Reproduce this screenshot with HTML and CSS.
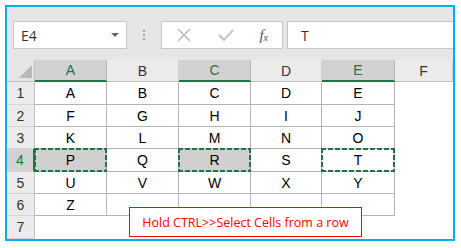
FILE: index.html
```html
<!DOCTYPE html>
<html lang="en">
<head>
    <meta charset="UTF-8">
    <meta name="viewport" content="width=device-width, initial-scale=1.0">
    <title>Select cells from a row</title>
    <link rel="stylesheet" href="styles.css">
</head>
<body>

<div class="frame">
    <div class="bar">
        <div class="namebox">
            <span>E4</span>
            <span class="arrow"></span>
        </div>
        <div class="dots"><i></i><i></i><i></i></div>
        <div class="fnbox">
            <svg width="16" height="16" viewBox="0 0 16 16"><path d="M2 2L14 14M14 2L2 14" stroke="#bdbdbd" stroke-width="1.6" fill="none"/></svg>
            <svg width="18" height="16" viewBox="0 0 18 16"><path d="M2 8L7 13L16 3" stroke="#bdbdbd" stroke-width="1.8" fill="none"/></svg>
            <span class="fx">f<sub>x</sub></span>
        </div>
        <div class="formula">T</div>
    </div>

    <div class="sheet">
        <div class="corner"><span class="tri"></span></div>
        <div class="hd sel">A</div>
        <div class="hd">B</div>
        <div class="hd sel">C</div>
        <div class="hd">D</div>
        <div class="hd sel">E</div>
        <div class="hd">F</div>

        <div class="rh">1</div>
        <div class="c">A</div><div class="c">B</div><div class="c">C</div><div class="c">D</div><div class="c">E</div><div class="c off"></div>

        <div class="rh">2</div>
        <div class="c">F</div><div class="c">G</div><div class="c">H</div><div class="c">I</div><div class="c">J</div><div class="c off"></div>

        <div class="rh">3</div>
        <div class="c">K</div><div class="c">L</div><div class="c">M</div><div class="c">N</div><div class="c">O</div><div class="c off"></div>

        <div class="rh sel">4</div>
        <div class="c grey ants">P</div><div class="c">Q</div><div class="c grey ants">R</div><div class="c">S</div><div class="c ants">T</div><div class="c off"></div>

        <div class="rh">5</div>
        <div class="c">U</div><div class="c">V</div><div class="c">W</div><div class="c">X</div><div class="c">Y</div><div class="c off"></div>

        <div class="rh">6</div>
        <div class="c">Z</div><div class="c"></div><div class="c"></div><div class="c"></div><div class="c"></div><div class="c off"></div>

        <div class="rh">7</div>
        <div class="c off"></div><div class="c off"></div><div class="c off"></div><div class="c off"></div><div class="c off"></div><div class="c off"></div>

        <div class="note">Hold CTRL&gt;&gt;Select Cells from a row</div>
    </div>
</div>

</body>
</html>
```

FILE: styles.css
```css
body {
    margin: 0;
    background-color: #fff;
    font-family: 'Liberation Sans', Arial, sans-serif;
}

.frame {
    margin: 5px;
    width: 446px;
    height: 232px;
    border: 2px solid #00b0f0;
    background-color: #fff;
    overflow: hidden;
}

/* formula bar */
.bar {
    height: 53px;
    box-sizing: border-box;
    padding: 14px 0 0 6px;
    background-color: #e6e6e6;
    display: flex;
    align-items: flex-start;
}
.namebox {
    width: 114px;
    height: 28px;
    box-sizing: border-box;
    border: 1px solid #c6c6c6;
    background-color: #fff;
    display: flex;
    align-items: center;
    justify-content: space-between;
    padding: 0 7px 0 7px;
    font-family: 'Open Sans', sans-serif;
    font-size: 14px;
    color: #333;
}
.arrow {
    width: 0;
    height: 0;
    border-left: 4px solid transparent;
    border-right: 4px solid transparent;
    border-top: 4px solid #666;
}
.dots {
    width: 34px;
    height: 28px;
    display: flex;
    flex-direction: column;
    align-items: center;
    justify-content: center;
    gap: 2px;
}
.dots i {
    width: 2px;
    height: 2px;
    background-color: #a8a8a8;
}
.fnbox {
    width: 122px;
    height: 28px;
    box-sizing: border-box;
    border: 1px solid #c6c6c6;
    background-color: #fff;
    display: flex;
    align-items: center;
    justify-content: space-between;
    padding: 0 14px 0 14px;
}
.fx {
    font-family: 'Liberation Serif', serif;
    font-style: italic;
    font-size: 15px;
    color: #555;
}
.fx sub {
    font-size: 10px;
    vertical-align: -1px;
}
.formula {
    flex: 1;
    margin-left: 4px;
    height: 28px;
    box-sizing: border-box;
    border: 1px solid #c6c6c6;
    border-right: none;
    background-color: #fff;
    display: flex;
    align-items: center;
    padding-left: 13px;
    font-family: 'Open Sans', sans-serif;
    font-size: 14px;
    color: #333;
}

/* grid */
.sheet {
    position: relative;
    display: grid;
    grid-template-columns: 28px 72px 72px 72px 71px 73px 1fr;
    grid-template-rows: 22px 23px 22px 22px 23px 22px 22px 23px;
    font-size: 14px;
}
.sheet > div {
    box-sizing: border-box;
    display: flex;
    align-items: center;
    justify-content: center;
}
.corner {
    background-color: #e6e6e6;
    border-right: 1px solid #c0c0c0;
    border-bottom: 1px solid #c0c0c0;
    position: relative;
}
.tri {
    position: absolute;
    right: 2px;
    bottom: 3px;
    width: 0;
    height: 0;
    border-left: 13px solid transparent;
    border-bottom: 13px solid #b8b8b8;
}
.hd {
    background-color: #ebebeb;
    border-right: 1px solid #d0d0d0;
    border-bottom: 1px solid #c0c0c0;
    color: #333;
}
.hd.sel {
    background-color: #d2d2d2;
    border-bottom: 2px solid #217346;
    border-right-color: #b8b8b8;
    color: #217346;
}
.rh {
    background-color: #ebebeb;
    border-right: 1px solid #c0c0c0;
    border-bottom: 1px solid #d4d4d4;
    color: #333;
}
.rh.sel {
    background-color: #d2d2d2;
    color: #217346;
    border-right: 2px solid #217346;
}
.c {
    background-color: #fff;
    border-right: 1px solid #b4b4b4;
    border-bottom: 1px solid #b4b4b4;
    color: #000;
    position: relative;
}
.c.off {
    border: none;
}
.c.grey {
    background-color: #d0d0d0;
}
.ants::after {
    content: '';
    position: absolute;
    top: -1px;
    left: -1px;
    right: -1px;
    bottom: -1px;
    background:
        repeating-linear-gradient(90deg, #217346 0 5px, transparent 5px 7px) top / 100% 2px no-repeat,
        repeating-linear-gradient(90deg, #217346 0 5px, transparent 5px 7px) bottom / 100% 2px no-repeat,
        repeating-linear-gradient(180deg, #217346 0 5px, transparent 5px 7px) left / 2px 100% no-repeat,
        repeating-linear-gradient(180deg, #217346 0 5px, transparent 5px 7px) right / 2px 100% no-repeat;
}

.note {
    position: absolute;
    left: 122px;
    top: 147px;
    width: 233px;
    height: 30px;
    border: 1px solid #ff0000;
    background-color: #fff;
    color: #ff0000;
    font-family: 'Open Sans', sans-serif;
    font-size: 12.5px;
}
```
